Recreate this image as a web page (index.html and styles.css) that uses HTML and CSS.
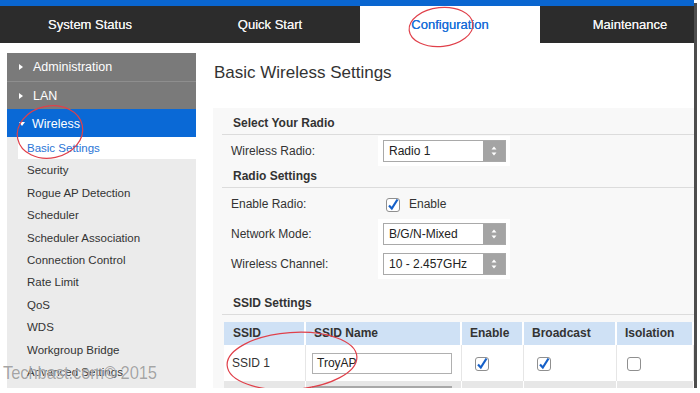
FILE: index.html
```html
<!DOCTYPE html>
<html>

<head>
  <meta charset="UTF-8">
  <title>Basic Wireless Settings</title>
  <link rel="stylesheet" href="styles.css">
</head>

<body>

  <div class="shot">
    <div class="stripe"></div>

    <nav class="tabs">
      <span class="tab">System Status</span>
      <span class="tab">Quick Start</span>
      <span class="tab on">Configuration</span>
      <span class="tab">Maintenance</span>
    </nav>

    <div class="page">

      <aside class="side">
        <div class="group"><i class="arr"></i>Administration</div>
        <div class="group"><i class="arr"></i>LAN</div>
        <div class="group open"><i class="arr"></i>Wireless</div>
        <ul class="sub">
          <li class="on">Basic Settings</li>
          <li>Security</li>
          <li>Rogue AP Detection</li>
          <li>Scheduler</li>
          <li>Scheduler Association</li>
          <li>Connection Control</li>
          <li>Rate Limit</li>
          <li>QoS</li>
          <li>WDS</li>
          <li>Workgroup Bridge</li>
          <li>Advanced Settings</li>
        </ul>
      </aside>

      <main class="main">
        <h1>Basic Wireless Settings</h1>

        <div class="panel">
          <h3 class="sect">Select Your Radio</h3>
          <div class="row">
            <span class="lbl">Wireless Radio:</span>
            <span class="val white">
              <span class="sel">Radio 1<i class="spin"><svg width="22" height="20" viewBox="0 0 22 20"><polygon points="8.5,8.5 13.5,8.5 11,5.5" fill="#fff"/><polygon points="8.5,11.5 13.5,11.5 11,14.5" fill="#fff"/></svg></i></span>
            </span>
          </div>

          <h3 class="sect">Radio Settings</h3>
          <div class="row">
            <span class="lbl">Enable Radio:</span>
            <span class="val check">
              <svg class="cb" width="14" height="15" viewBox="0 0 14 15"><rect x="0.5" y="1.5" width="13" height="13" rx="2.5" fill="#fff" stroke="#8f8f8f"/><path d="M3 8.5 L5.8 11.5 L11.5 2.5" fill="none" stroke="#1660c8" stroke-width="2.2"/></svg>
              Enable
            </span>
          </div>
          <div class="row">
            <span class="lbl">Network Mode:</span>
            <span class="val white">
              <span class="sel">B/G/N-Mixed<i class="spin"><svg width="22" height="20" viewBox="0 0 22 20"><polygon points="8.5,8.5 13.5,8.5 11,5.5" fill="#fff"/><polygon points="8.5,11.5 13.5,11.5 11,14.5" fill="#fff"/></svg></i></span>
            </span>
          </div>
          <div class="row">
            <span class="lbl">Wireless Channel:</span>
            <span class="val white">
              <span class="sel">10 - 2.457GHz<i class="spin"><svg width="22" height="20" viewBox="0 0 22 20"><polygon points="8.5,8.5 13.5,8.5 11,5.5" fill="#fff"/><polygon points="8.5,11.5 13.5,11.5 11,14.5" fill="#fff"/></svg></i></span>
            </span>
          </div>

          <h3 class="sect gap">SSID Settings</h3>
          <div class="grid">
            <div class="th">SSID</div>
            <div class="th">SSID Name</div>
            <div class="th">Enable</div>
            <div class="th">Broadcast</div>
            <div class="th">Isolation</div>

            <div class="td">SSID 1</div>
            <div class="td"><span class="inp">TroyAP</span></div>
            <div class="td"><svg class="cb" width="14" height="15" viewBox="0 0 14 15"><rect x="0.5" y="1.5" width="13" height="13" rx="2.5" fill="#fff" stroke="#8f8f8f"/><path d="M3 8.5 L5.8 11.5 L11.5 2.5" fill="none" stroke="#1660c8" stroke-width="2.2"/></svg></div>
            <div class="td"><svg class="cb" width="14" height="15" viewBox="0 0 14 15"><rect x="0.5" y="1.5" width="13" height="13" rx="2.5" fill="#fff" stroke="#8f8f8f"/><path d="M3 8.5 L5.8 11.5 L11.5 2.5" fill="none" stroke="#1660c8" stroke-width="2.2"/></svg></div>
            <div class="td"><svg class="cb" width="14" height="15" viewBox="0 0 14 15"><rect x="0.5" y="1.5" width="13" height="13" rx="2.5" fill="#fff" stroke="#8f8f8f"/></svg></div>

            <div class="tr2"></div>
            <div class="tr2"><span class="inp2"></span></div>
            <div class="tr2"></div>
            <div class="tr2"></div>
            <div class="tr2"></div>
          </div>
        </div>
      </main>

    </div>

    <div class="mark">Techbast.com© 2015</div>

    <!-- red marker rings drawn over the capture -->
    <svg class="ink" width="694" height="388" viewBox="0 0 694 388">
      <ellipse cx="441" cy="27" rx="32" ry="19.5" transform="rotate(-6 441 27)" />
      <ellipse cx="50" cy="132" rx="33" ry="26" transform="rotate(-12 50 132)" />
      <ellipse cx="292" cy="361" rx="65" ry="28.5" transform="rotate(-4 292 361)" />
    </svg>
  </div>

</body>

</html>
```

FILE: styles.css
```css
body {
  margin: 0;
  background: #fff;
  font-family: "Liberation Sans", Arial, sans-serif;
  color: #333;
}

.shot {
  position: relative;
  width: 694px;
  height: 388px;
  overflow: hidden;
  background: #fff;
  box-shadow: 3px 3px 0 #4d4d4d;
}

.stripe {
  height: 6px;
  background: #0a66d0;
}

/* top tabs */
.tabs {
  display: flex;
  height: 37px;
  background: #2c2c2c;
}

.tab {
  flex: none;
  width: 180px;
  text-align: center;
  line-height: 37px;
  font-size: 13px;
  color: #f2f2f2;
  text-shadow: 0 0 0.4px #f2f2f2;
}

.tab.on {
  background: #fff;
  color: #1c6fd8;
  text-shadow: 0 0 0.4px #1c6fd8;
}

.page {
  display: flex;
  padding-top: 10px;
}

/* left menu */
.side {
  flex: none;
  width: 189px;
  margin-left: 7px;
}

.group {
  display: flex;
  align-items: center;
  height: 27px;
  padding-left: 12px;
  background: #7a7a7a;
  border-top: 1px solid #8e8e8e;
  color: #fff;
  font-size: 12.5px;
}

.group:first-child {
  height: 28px;
  border-top: none;
}

.group.open {
  background: #0a69d6;
  border-top-color: #0a69d6;
}

.arr {
  width: 0;
  height: 0;
  margin-right: 10px;
  border-left: 4px solid #fff;
  border-top: 3.5px solid transparent;
  border-bottom: 3.5px solid transparent;
}

.group.open .arr {
  margin-right: 7px;
  border-top: 4px solid #fff;
  border-left: 3.5px solid transparent;
  border-right: 3.5px solid transparent;
  border-bottom: none;
}

.sub {
  list-style: none;
  margin: 0;
  padding: 0 0 40px;
  background: #ebebeb;
}

.sub li {
  height: 22.4px;
  line-height: 22.4px;
  padding-left: 20px;
  font-size: 11.5px;
  color: #333;
}

.sub li.on {
  margin-left: 11px;
  padding-left: 9px;
  background: #fff;
  color: #2a74d6;
}

/* content */
.main {
  flex: 1;
  margin-left: 17px;
}

h1 {
  margin: 10px 0 25px 1px;
  line-height: 20px;
  font-size: 17px;
  font-weight: normal;
  color: #333;
}

.panel {
  height: 300px;
  padding-top: 5px;
  background: #f8f8f8;
}

.sect {
  margin: 0 0 0 9px;
  padding: 1px 0 2px 11px;
  line-height: 18px;
  font-size: 12px;
  font-weight: bold;
  color: #333;
  border-bottom: 1px solid #dcdcdc;
}

.sect.gap {
  margin-top: 14px;
}

.row {
  display: flex;
  height: 30px;
}

.sect + .row {
  margin-top: 1px;
}

.lbl {
  display: flex;
  align-items: center;
  width: 147px;
  padding-left: 18px;
  font-size: 12px;
}

.val {
  display: flex;
  align-items: center;
  width: 127px;
  padding-left: 5px;
  font-size: 12px;
}

.val.white {
  background: #fff;
}

.val.check {
  padding-left: 8px;
  gap: 9px;
}

.sel {
  display: flex;
  width: 116px;
  height: 20px;
  padding-left: 5px;
  border: 1px solid #a9a9a9;
  background: #fff;
  line-height: 20px;
  font-size: 12px;
  color: #222;
}

.spin {
  display: block;
  margin-left: auto;
  width: 22px;
  height: 20px;
  background: #a4a4a4;
}

.spin svg,
.cb {
  display: block;
}

/* ssid table */
.grid {
  display: grid;
  grid-template-columns: 82px 156px 62px 93px 1fr;
  margin: 7px 0 0 11px;
}

.th {
  height: 23px;
  line-height: 23px;
  padding-left: 8px;
  background: #cfe1f5;
  border-right: 2px solid #fff;
  font-size: 12px;
  font-weight: bold;
  color: #333;
}

.th:first-child {
  padding-left: 9px;
}

.td {
  display: flex;
  align-items: center;
  height: 36px;
  padding-left: 13px;
  background: #fff;
  border-right: 1px solid #e6e6e6;
  font-size: 12px;
}

.td:nth-child(6) {
  padding-left: 8px;
}

.td:nth-child(7) {
  padding-left: 6px;
}

.td:nth-child(10) {
  padding-left: 10px;
}

.inp {
  width: 134px;
  height: 19px;
  padding-left: 4px;
  border: 1px solid #b0b0b0;
  line-height: 19px;
  color: #222;
}

.tr2 {
  height: 20px;
  background: #e7e7e7;
  border-right: 1px solid #fff;
}

.inp2 {
  display: block;
  width: 140px;
  height: 10px;
  margin: 5px 0 0 6px;
  background: #a8a8a8;
}

/* overlays */
.mark {
  position: absolute;
  left: 3px;
  top: 362px;
  font-size: 19px;
  letter-spacing: -0.1px;
  color: rgba(105, 105, 105, 0.6);
  text-shadow: 0 0 1px #fff;
  transform: scaleX(0.87);
  transform-origin: left top;
  white-space: nowrap;
}

.ink {
  position: absolute;
  left: 0;
  top: 0;
  pointer-events: none;
}

.ink ellipse {
  fill: none;
  stroke: #e0404a;
  stroke-width: 1.2;
}
```
